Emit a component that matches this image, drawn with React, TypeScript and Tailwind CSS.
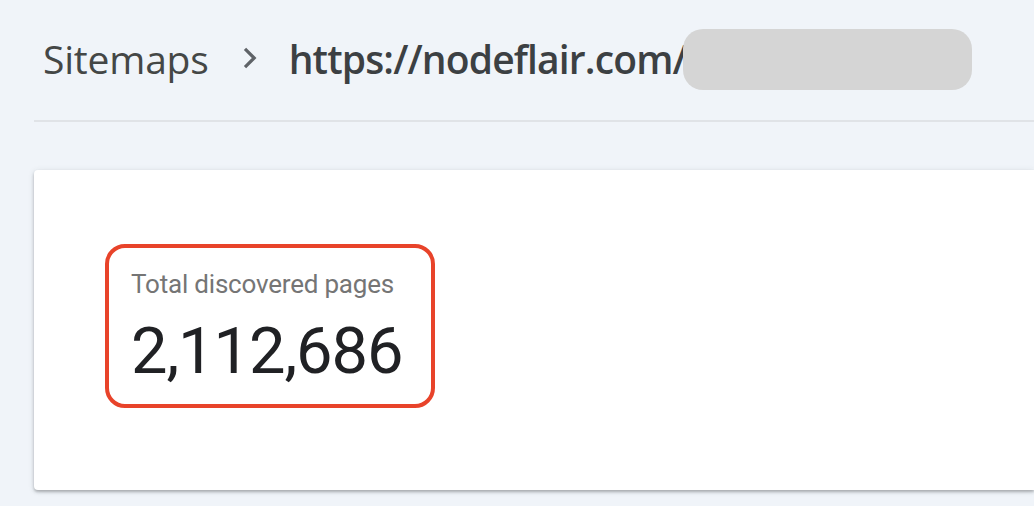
import React from "react";

export default function App() {
  return (
    <div className="w-[1034px] h-[506px] overflow-hidden bg-[#f0f4f9]" style={{ fontFamily: "Roboto, sans-serif" }}>
      <div className="pl-[34px]">
        <div className="h-[120px] flex items-center pl-[9px] pb-[2px]">
          <span className="text-[39px] text-[#444746] tracking-[-0.2px]" style={{ fontFamily: "'Open Sans', sans-serif" }}>Sitemaps</span>
          <svg className="ml-[33px] mr-[30px] mt-[-2px]" width="17" height="22" viewBox="0 0 17 22">
            <path d="M3 1.8 L12.2 11 L3 20.2" fill="none" stroke="#5f6368" strokeWidth="3.2" />
          </svg>
          <span className="text-[39px] font-semibold text-[#3c4043] tracking-[-0.85px]" style={{ fontFamily: "'Open Sans', sans-serif" }}>https://nodeflair.com/</span>
          <div className="-ml-[4px] w-[289px] h-[61px] rounded-[20px] bg-[#d5d5d5]" />
        </div>
        <div className="h-[2px] bg-[#e0e3e7]" />
        <div className="mt-[48px] h-[320px] bg-white rounded-l-[4px] shadow-[0_2px_3px_rgba(60,64,67,0.35),0_1px_6px_rgba(60,64,67,0.12)] pt-[74px] pl-[71px]">
          <div className="w-[330px] h-[164px] border-[4px] border-[#e8432a] rounded-[20px] pl-[22px] pt-[19px]">
            <div className="text-[26px] leading-[34px] text-[#757575] tracking-[-0.2px]">Total discovered pages</div>
            <div className="mt-[12px] text-[65px] leading-[76px] text-[#202124] tracking-[-1.1px]">2,112,686</div>
          </div>
        </div>
      </div>
    </div>
  );
}
